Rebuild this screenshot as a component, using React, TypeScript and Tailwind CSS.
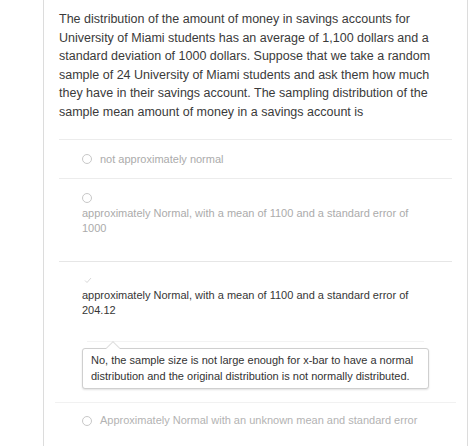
import React from "react";

const QUESTION =
  "The distribution of the amount of money in savings accounts for University of Miami students has an average of 1,100 dollars and a standard deviation of 1000 dollars. Suppose that we take a random sample of 24 University of Miami students and ask them how much they have in their savings account. The sampling distribution of the sample mean amount of money in a savings account is";

function Radio() {
  return <span className="inline-block w-[10px] h-[10px] rounded-full border border-[#c8c8c8] bg-white shrink-0" />;
}

export default function App() {
  return (
    <div className="w-[474px] h-[446px] overflow-hidden bg-white font-['Liberation_Sans',Arial,sans-serif]">
      <div className="ml-[43px] w-[425px] h-[446px] border-x border-[#dcdcdc] px-[15px] pt-[10px]">
        {/* Question */}
        <p className="text-[12.5px] leading-[18.5px] text-[#3a3a3a] pr-[8px]">{QUESTION}</p>
        <div className="mt-[18px] border-t border-[#ececec]" />

        {/* Option 1 */}
        <div className="pl-[23px] py-[11.5px] flex items-center gap-[8px] text-[11px] leading-[15px] text-[#ababab]">
          <Radio />
          <span>not approximately normal</span>
        </div>
        <div className="border-t border-[#ececec]" />

        {/* Option 2 */}
        <div className="pl-[23px] pr-[23px] pt-[11.5px] pb-[25.5px] text-[11px] leading-[15px] text-[#ababab]">
          <div className="h-[15px] flex items-center">
            <Radio />
          </div>
          <p>approximately Normal, with a mean of 1100 and a standard error of 1000</p>
        </div>
        <div className="border-t border-[#e6e6e6]" />

        {/* Option 3 - selected */}
        <div className="pl-[23px] pr-[23px] pt-[10.5px] text-[11px] leading-[15px] text-[#363636]">
          <div className="h-[15px] flex items-center">
            <svg width="10" height="10" viewBox="0 0 10 10" className="ml-[1px]">
              <path d="M2 5.5 L4 7.5 L8 3" fill="none" stroke="#d8d8d8" strokeWidth="1" />
            </svg>
          </div>
          <p>approximately Normal, with a mean of 1100 and a standard error of 204.12</p>
        </div>

        {/* Feedback */}
        <div className="mt-[23px] border-t border-[#f3f3f3] ml-[28px] mr-[28px]" />
        <div className="relative ml-[23px] mt-[6px] w-[347px] rounded-[3px] border border-[#cfcfcf] bg-white px-[8px] py-[3.5px] shadow-[0_1px_2px_rgba(0,0,0,0.12)]">
          <span className="absolute -top-[6px] left-[25px] w-[10px] h-[10px] rotate-45 bg-white border-l border-t border-[#dedede]" />
          <p className="relative text-[11px] leading-[16px] text-[#333]">
            No, the sample size is not large enough for x-bar to have a normal distribution and the original distribution is not normally distributed.
          </p>
        </div>
        <div className="mt-[13px] -mx-[4px] border-t border-[#f1f1f1]" />

        {/* Option 4 */}
        <div className="pl-[23px] pt-[10.5px] flex items-center gap-[8px] text-[11px] leading-[15px] text-[#b3b3b3]">
          <Radio />
          <span>Approximately Normal with an unknown mean and standard error</span>
        </div>
      </div>
    </div>
  );
}
